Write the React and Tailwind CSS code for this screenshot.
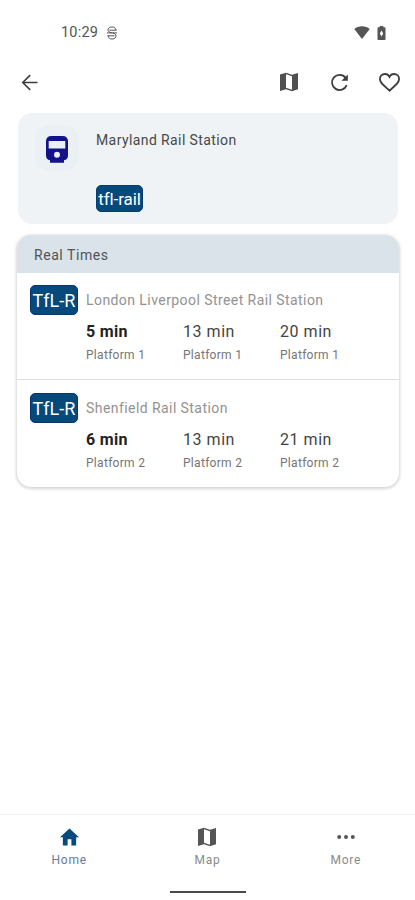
import React, { useState } from "react";

const lines = [
  {
    badge: "TfL-R",
    destination: "London Liverpool Street Rail Station",
    platform: "Platform 1",
    times: ["5 min", "13 min", "20 min"],
  },
  {
    badge: "TfL-R",
    destination: "Shenfield Rail Station",
    platform: "Platform 2",
    times: ["6 min", "13 min", "21 min"],
  },
];

const MapIcon = ({ className }) => (
  <svg viewBox="0 0 20 20" className={className} fill="currentColor">
    <path d="M1 2.4 7 .8 13 2.8 19 .9V17.3L13 19.2 7 17.2 1 18.9ZM7 2.3V15.7L13 17.7V4.300Z" fillRule="evenodd" />
  </svg>
);

const StatusBar = () => (
  <div className="flex h-16 items-center pt-px pr-[29px] pl-[61px] text-[#555555]">
    <p className="pt-px text-[14.5px] leading-none tracking-[0.2px]">10:29</p>
    <svg viewBox="0 0 12 14" className="ml-2 h-[14px] w-3" fill="none" stroke="currentColor" strokeWidth="1">
      <path d="M10 4.2C9.7 2 8.2 1 6 1 3.6 1 2 2.2 2 4.1 2 5.6 3.2 6.3 6 6.8M1 6.9H11M2 9.7C2.4 12 3.8 13 6 13 8.5 13 10 11.8 10 9.9 10 8.3 8.8 7.4 6.5 6.9M3.5 4.2H10.5M1.5 9.8H8.5" />
    </svg>
    <div className="ml-auto flex items-center gap-[7px]">
      <svg viewBox="0 0 16 13" className="h-[13px] w-4" fill="currentColor">
        <path d="M8 13 .3 3.1C2.3 1.3 5 .3 8 .3s5.7 1 7.7 2.8Z" />
      </svg>
      <svg viewBox="0 0 9 14" className="h-[14px] w-[9px]" fill="currentColor">
        <path fillRule="evenodd" d="M2.7 0H6.3V1.3H7.7Q8.5 1.3 8.5 2.2V13Q8.5 13.9 7.7 13.9H1.3Q.5 13.9.5 13V2.2Q.5 1.3 1.3 1.3H2.7ZM4.5 4.4 2.8 7.4 4.5 10.6 6.2 7.4Z" />
      </svg>
    </div>
  </div>
);

const AppBar = ({ liked, setLiked }) => (
  <div className="flex h-9 items-center pr-[15px] pl-[21px] text-[#3c3c3c]">
    <button type="button" aria-label="Back">
      <svg viewBox="0 0 18 18" className="h-[17px] w-[17px]" fill="none" stroke="currentColor" strokeWidth="1.7">
        <path d="M17.5 9H2M9.7 1.2 1.9 9l7.8 7.8" />
      </svg>
    </button>
    <div className="ml-auto flex items-center">
      <button type="button" aria-label="Map">
        <MapIcon className="h-5 w-5 text-[#505050]" />
      </button>
      <button type="button" aria-label="Refresh" className="ml-[31px]">
        <svg viewBox="0 0 19 19" className="h-[19px] w-[19px]" fill="none" stroke="currentColor" strokeWidth="1.8">
          <path d="M16.7 12.2A7.6 7.6 0 1 1 15.6 4.7L16.7 6" />
          <path d="M17.8 1.4V7.7H11.5Z" fill="currentColor" stroke="none" />
        </svg>
      </button>
      <button
        type="button"
        aria-label="Favourite"
        className="ml-[30px]"
        onClick={() => setLiked(!liked)}
      >
        <svg viewBox="0 0 21 19" className="h-[19px] w-[21px]" fill={liked ? "currentColor" : "none"} stroke="currentColor" strokeWidth="1.8">
          <path d="M10.5 17.7 3.3 11C1.6 9.3.9 8 .9 6.1.9 3.2 3.1 1 5.9 1 7.9 1 9.6 2.1 10.5 3.9 11.4 2.1 13.1 1 15.1 1 17.9 1 20.1 3.2 20.1 6.1 20.1 8 19.4 9.3 17.7 11Z" />
        </svg>
      </button>
    </div>
  </div>
);

const StationCard = () => (
  <div className="mr-[17px] ml-[18px] mt-[13px] flex h-[111px] rounded-[14px] bg-[#eff3f6] pt-3 pl-4">
    <div className="flex h-[46px] w-[45px] items-center justify-center rounded-2xl bg-[#eaf0f3]">
      <svg viewBox="0 0 22 27" className="mt-0.5 h-[27px] w-[22px]" fill="#12128a">
        <path fillRule="evenodd" d="M5.500 0H16.500Q22 0 22 5.500V19.500Q22 23.500 18 24.300V26.800H4V24.300Q0 23.500 0 19.500V5.500Q0 0 5.500 0ZM2.700 5V12.500H19.300V5ZM11 15.700A3 3 0 1 0 11 21.700 3 3 0 1 0 11 15.700Z" />
      </svg>
    </div>
    <div className="ml-[17px] flex flex-col items-start">
      <p className="mt-[5px] text-sm leading-5 tracking-[0.4px] text-[#484848]">
        Maryland Rail Station
      </p>
      <span className="mt-[35px] flex h-[27px] w-[47px] items-center justify-center rounded-[5px] border border-[#063d70] bg-[#064a7b] pt-0.5 text-[17px] tracking-[-0.1px] whitespace-nowrap text-white">
        tfl-rail
      </span>
    </div>
  </div>
);

const LineRow = ({ line }) => (
  <div className="flex h-[107px] pt-3 pl-[13px] last:pt-[13px]">
    <span className="flex h-[30px] w-12 shrink-0 items-center justify-center rounded-[5px] border border-[#08356b] bg-[#064a7b] text-[18px] whitespace-nowrap text-white">
      {line.badge}
    </span>
    <div className="ml-2 flex-1">
      <p className="mt-[5px] text-sm leading-5 tracking-[0.43px] text-[#929292]">
        {line.destination}
      </p>
      <div className="mt-3 flex">
        {line.times.map((time, i) => (
          <div key={i} className="w-[97px]">
            <p
              className={`text-base leading-5 ${i === 0 ? "font-bold tracking-[0.3px] text-[#222222]" : "tracking-[0.55px] text-[#444444]"}`}
            >
              {time}
            </p>
            <p className="mt-[5px] text-xs leading-4 tracking-[0.3px] text-[#757575]">
              {line.platform}
            </p>
          </div>
        ))}
      </div>
    </div>
  </div>
);

const BottomNav = ({ tab, setTab }) => {
  const items = [
    {
      name: "Home",
      icon: (
        <svg viewBox="0 0 20 18" className="h-[18px] w-[19px]" fill="currentColor">
          <path d="M10 0 20 9.3H17V18H12V11.3H8V18H3V9.3H0Z" />
        </svg>
      ),
    },
    { name: "Map", icon: <MapIcon className="h-5 w-5" /> },
    {
      name: "More",
      icon: (
        <svg viewBox="0 0 18 4" className="h-1 w-[18px]" fill="currentColor">
          <circle cx="2.2" cy="2" r="2" />
          <circle cx="9" cy="2" r="2" />
          <circle cx="15.8" cy="2" r="2" />
        </svg>
      ),
    },
  ];

  return (
    <div className="mt-auto h-[86px] border-t border-[#f3f3f3]">
      <div className="flex">
        {items.map((item) => (
          <button
            type="button"
            key={item.name}
            onClick={() => setTab(item.name)}
            className="flex flex-1 flex-col items-center pt-3"
          >
            <span
              className={`flex h-5 items-center ${tab === item.name ? "text-[#064a7b]" : "text-[#555555]"}`}
            >
              {item.icon}
            </span>
            <span
              className={`mt-[5px] text-xs leading-4 tracking-[0.8px] ${tab === item.name ? "text-[#667b9c]" : "text-[#8a8a8a]"}`}
            >
              {item.name}
            </span>
          </button>
        ))}
      </div>
      <div className="mx-auto mt-[23px] h-[2px] w-[76px] bg-[#4a4a4a]"></div>
    </div>
  );
};

const App = () => {
  const [liked, setLiked] = useState(false);
  const [tab, setTab] = useState("Home");

  return (
    <div className="flex h-[900px] w-[415px] flex-col bg-white font-['Roboto',sans-serif]">
      <StatusBar />
      <AppBar liked={liked} setLiked={setLiked} />
      <StationCard />

      {/* arrivals */}
      <div className="mr-4 ml-[17px] mt-[11px] h-[252px] overflow-hidden rounded-[14px] bg-white shadow-[0_1px_3px_1px_rgba(0,0,0,0.17)]">
        <div className="flex h-[38px] items-center bg-[#dae3e9] pt-px pl-[17px] text-sm tracking-[0.55px] text-[#505458]">
          Real Times
        </div>
        <div className="divide-y divide-[#dddddd]">
          {lines.map((line) => (
            <LineRow key={line.destination} line={line} />
          ))}
        </div>
      </div>

      <BottomNav tab={tab} setTab={setTab} />
    </div>
  );
};

export default App;
